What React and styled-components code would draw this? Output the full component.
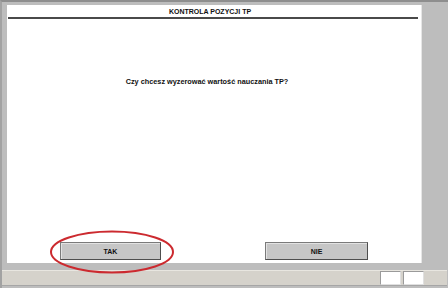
import React from "react";
import styled, { createGlobalStyle } from "styled-components";

const GlobalStyle = createGlobalStyle`
  html, body {
    margin: 0;
    padding: 0;
    background: #bdbdbd;
  }
  * { box-sizing: border-box; }
`;

const Screen = styled.div`
  position: relative;
  width: 448px;
  height: 288px;
  background: #bdbdbd;
  border-top: 2px solid #8e8e8e;
  border-left: 2px solid #a2a2a2;
  display: flex;
  flex-direction: column;
  font-family: "Liberation Sans", Arial, sans-serif;
  overflow: hidden;
`;

const Workspace = styled.div`
  padding: 3px 0 0 5px;
  display: flex;
`;

const Panel = styled.div`
  width: 415px;
  height: 258px;
  background: #ffffff;
  border-right: 1px solid #e6e6e6;
  display: flex;
  flex-direction: column;
`;

const TitleBar = styled.div`
  height: 14px;
  margin: 0 3px 0 1px;
  border-bottom: 2px solid #4a4a4a;
  font-size: 7px;
  font-weight: bold;
  color: #111;
  text-align: center;
  line-height: 13px;
  padding-right: 6px;
`;

const Message = styled.div`
  margin-top: 58px;
  font-size: 7.3px;
  font-weight: bold;
  color: #111;
  text-align: center;
  padding-right: 14px;
`;

const Spacer = styled.div`
  flex: 1;
`;

const ButtonRow = styled.div`
  display: flex;
  gap: 104px;
  padding: 0 0 3px 53px;
`;

const Button = styled.button`
  width: ${(p) => p.$w}px;
  height: 18px;
  background: #c6c6c6;
  border: 1px solid #4e4e4e;
  border-top-color: #7a7a7a;
  border-left-color: #7a7a7a;
  box-shadow: inset 1px 1px 0 #e2e2e2;
  font-family: "Liberation Sans", Arial, sans-serif;
  font-size: 7px;
  font-weight: bold;
  color: #111;
  padding: 0;
`;

const StatusBar = styled.div`
  margin: 7px 1px 0 0;
  height: 16px;
  background: #d5d2cb;
  border-top: 1px solid #e8e6e0;
  border-bottom: 1px solid #a6a6a6;
  display: flex;
  justify-content: flex-end;
  align-items: center;
  gap: 2px;
  padding-right: 23px;
`;

const StatusCell = styled.div`
  width: 21px;
  height: 14px;
  background: #ffffff;
  border: 1px solid #9a9a9a;
  border-bottom-color: #e0e0e0;
  border-right-color: #e0e0e0;
`;

const Annotation = styled.svg`
  position: absolute;
  left: 0;
  top: 0;
  pointer-events: none;
`;

export default function App() {
  return (
    <>
      <GlobalStyle />
      <Screen>
        <Workspace>
          <Panel>
            <TitleBar>KONTROLA POZYCJI TP</TitleBar>
            <Message>Czy chcesz wyzerować wartość nauczania TP?</Message>
            <Spacer />
            <ButtonRow>
              <Button $w={101}>TAK</Button>
              <Button $w={103}>NIE</Button>
            </ButtonRow>
          </Panel>
        </Workspace>
        <StatusBar>
          <StatusCell />
          <StatusCell />
        </StatusBar>
        <Annotation width="448" height="288" viewBox="0 0 448 288">
          <ellipse cx="110" cy="250" rx="61" ry="20.5" fill="none" stroke="#cc2a2f" strokeWidth="2" />
        </Annotation>
      </Screen>
    </>
  );
}
